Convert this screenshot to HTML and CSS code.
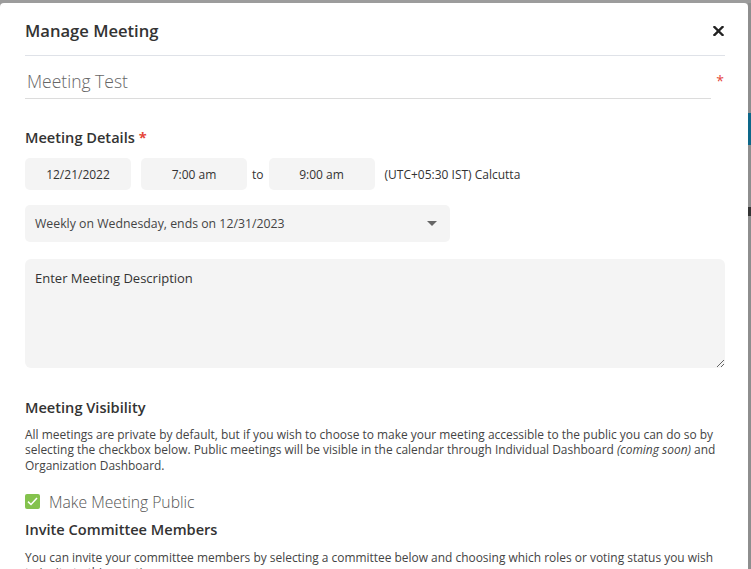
FILE: index.html
```html
<!DOCTYPE html>
<html lang="en">
<head>
    <meta charset="UTF-8">
    <meta name="viewport" content="width=device-width, initial-scale=1.0">
    <title>Manage Meeting</title>
    <link rel="stylesheet" href="styles.css">
</head>
<body>
    <div class="screen">
        <div class="modal">
            <div class="modal-head">
                <h2 class="modal-title">Manage Meeting</h2>
                <button class="close-btn" type="button" aria-label="Close">
                    <svg width="11" height="10" viewBox="0 0 11 10"><path d="M1.5 1 L9.5 9 M9.5 1 L1.5 9" stroke="#222" stroke-width="2.4" stroke-linecap="square"/></svg>
                </button>
            </div>

            <div class="title-row">
                <div class="title-field">Meeting Test</div>
                <span class="req">*</span>
            </div>

            <h3 class="section-title first">Meeting Details <span class="req">*</span></h3>
            <div class="time-row">
                <div class="field-box">12/21/2022</div>
                <div class="field-box">7:00 am</div>
                <span class="to">to</span>
                <div class="field-box">9:00 am</div>
                <span class="tz">(UTC+05:30 IST) Calcutta</span>
            </div>

            <div class="select-box">
                <span>Weekly on Wednesday, ends on 12/31/2023</span>
                <svg width="10" height="5" viewBox="0 0 10 5"><path d="M0 0 H10 L5 5 Z" fill="#666"/></svg>
            </div>

            <textarea class="description" placeholder="Enter Meeting Description"></textarea>

            <h3 class="section-title visibility">Meeting Visibility</h3>
            <p class="note">All meetings are private by default, but if you wish to choose to make your meeting accessible to the public you can do so by selecting the checkbox below. Public meetings will be visible in the calendar through Individual Dashboard <em>(coming soon)</em> and Organization Dashboard.</p>

            <label class="check-row">
                <span class="check-box">
                    <svg width="11" height="9" viewBox="0 0 11 9"><path d="M1 4.6 L4 7.5 L10 1" fill="none" stroke="#fff" stroke-width="1.5"/></svg>
                </span>
                Make Meeting Public
            </label>

            <h3 class="section-title invite">Invite Committee Members</h3>
            <p class="note invite-note">You can invite your committee members by selecting a committee below and choosing which roles or voting status you wish to invite to this meeting.</p>
        </div>
        <div class="peek">
            <div class="peek-bar"></div>
            <div class="peek-tick"></div>
        </div>
    </div>
</body>
</html>
```

FILE: styles.css
```css
body { margin: 0; background: #9c9c9c; font-family: "Open Sans", "Noto Sans", sans-serif; color: #333; overflow: hidden; }
.screen { display: flex; padding-top: 3px; height: 566px; }
.modal { width: 748px; flex: none; box-sizing: border-box; padding: 0 23px 0 25px; background: #fff; border-radius: 4px 4px 0 0; overflow: hidden; }
.peek { flex: 1; background: #8e8e8e; }
.peek-bar { margin-top: 110px; height: 32px; background: #0d6789; }
.peek-tick { margin-top: 62px; height: 9px; background: #333; }

.modal-head { display: flex; justify-content: space-between; align-items: center; padding: 16px 0 12px; border-bottom: 1px solid #dfe2e8; }
.modal-title { margin: 0; font-size: 16.6px; font-weight: 600; line-height: 24px; color: #333; }
.close-btn { background: none; border: none; padding: 0; margin-right: 1px; display: flex; cursor: pointer; }

.title-row { display: flex; align-items: flex-start; gap: 5px; margin-top: 14px; }
.title-field { flex: 1; padding: 0 0 6px 2px; font-size: 17.5px; font-weight: 300; line-height: 22px; color: #666; border-bottom: 1px solid #dcdcdc; }
.req { color: #e5473a; font-weight: 400; }
.title-row .req { font-size: 14px; line-height: 14px; margin-top: 4px; margin-right: 1px; }

.section-title { margin: 0; font-size: 14.6px; font-weight: 600; line-height: 20px; color: #333; }
.section-title.first { margin-top: 28px; }
.section-title .req { font-weight: 700; }

.time-row { display: flex; align-items: center; gap: 10px; margin-top: 11px; font-size: 12px; }
.field-box { width: 106px; height: 32px; display: flex; align-items: center; justify-content: center; background: #f4f4f4; border-radius: 5px; color: #333; }
.to { margin: 0 -5px 0 -5px; color: #333; font-size: 12px; }
.tz { font-size: 12px; color: #333; }

.select-box { width: 425px; height: 37px; box-sizing: border-box; margin-top: 15px; padding: 0 13px 0 10px; display: flex; align-items: center; justify-content: space-between; background: #f4f4f4; border-radius: 5px; font-size: 12.3px; color: #444; }

.description { display: block; width: 700px; height: 109px; box-sizing: border-box; margin-top: 17px; padding: 10px 10px; border: none; border-radius: 6px; background: #f4f4f4; font-family: inherit; font-size: 13px; line-height: 18px; color: #333; resize: vertical; outline: none; }
.description::placeholder { color: #333; }

.section-title.visibility { margin-top: 29px; }
.note { margin: 10px 0 0; font-size: 11.95px; line-height: 15.3px; color: #444; }

.check-row { display: flex; align-items: center; gap: 9px; margin-top: 18px; font-size: 15.7px; font-weight: 300; line-height: 22px; color: #555; }
.check-box { width: 15px; height: 15px; display: flex; align-items: center; justify-content: center; background: #84c24d; border-radius: 2px; }

.section-title.invite { margin-top: 6px; }
.invite-note { margin-top: 11px; }
```
